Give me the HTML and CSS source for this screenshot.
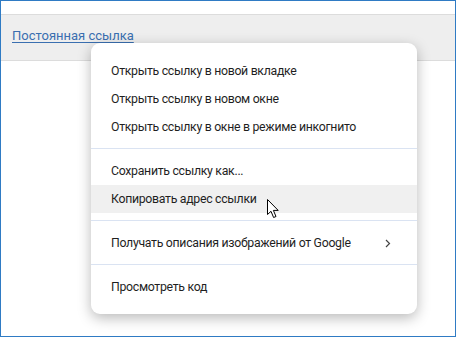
FILE: index.html
```html
<!DOCTYPE html>
<html lang="ru">
<head>
    <meta charset="UTF-8">
    <title>Контекстное меню ссылки</title>
    <link rel="stylesheet" href="styles.css">
</head>
<body>

    <div class="frame">
        <div class="post-bar">
            <a class="permalink" href="#">Постоянная ссылка</a>
        </div>

        <ul class="context-menu">
            <li class="item">Открыть ссылку в новой вкладке</li>
            <li class="item">Открыть ссылку в новом окне</li>
            <li class="item">Открыть ссылку в окне в режиме инкогнито</li>
            <li class="sep"></li>
            <li class="item">Сохранить ссылку как...</li>
            <li class="item hover">
                Копировать адрес ссылки
                <!-- курсор мыши -->
                <svg class="cursor" width="13" height="20" viewBox="0 0 13 20">
                    <path d="M0.5 0.5 L0.5 15.5 L4 12.3 L6.6 18.5 L9 17.5 L6.4 11.4 L11.2 11.4 Z"
                          fill="#fff" stroke="#000" stroke-width="1" stroke-linejoin="miter"/>
                </svg>
            </li>
            <li class="sep"></li>
            <li class="item">
                Получать описания изображений от Google
                <span class="chevron">
                    <svg width="6" height="9" viewBox="0 0 6 9">
                        <path d="M1 1 L4.5 4.5 L1 8" fill="none" stroke="#444" stroke-width="1.2"/>
                    </svg>
                </span>
            </li>
            <li class="sep"></li>
            <li class="item">Просмотреть код</li>
        </ul>
    </div>

</body>
</html>
```

FILE: styles.css
```css
:root {
    --frame: #2f7bc4;
    --text: #1f1f1f;
    --link: #3a6fb0;
    --sep: #dae3f2;
    --hover: #f0f0f0;
}

body {
    margin: 0;
    font-family: 'Roboto', 'Noto Sans', sans-serif;
    background: #fff;
}

.frame {
    position: relative;
    height: 335px;
    border: 1px solid var(--frame);
    background: #fff;
    overflow: hidden;
}

.post-bar {
    margin-top: 13px;
    width: 443px;
    height: 45px;
    background: #eeeeee;
    border: 1px solid #dcdcdc;
    border-left: none;
    display: flex;
    align-items: center;
    padding-left: 11px;
    box-sizing: content-box;
}

.permalink {
    color: var(--link);
    font-size: 13px;
    text-decoration: underline;
    text-underline-offset: 2px;
    margin-top: -4px;
}

.context-menu {
    position: absolute;
    left: 90px;
    top: 42px;
    width: 326px;
    margin: 0;
    padding: 14px 0 13px;
    list-style: none;
    background: #fff;
    border-radius: 9px;
    box-shadow: 0 4px 14px rgba(0,0,0,0.28);
    box-sizing: border-box;
}

.item {
    position: relative;
    height: 28px;
    display: flex;
    align-items: center;
    padding: 0 20px;
    font-size: 12.3px;
    letter-spacing: -0.3px;
    color: var(--text);
}

.item.hover {
    background: var(--hover);
}

.sep {
    height: 1px;
    background: var(--sep);
    margin: 7px 0 8px;
}

.chevron {
    margin-left: auto;
    margin-right: 6px;
    display: flex;
}

.cursor {
    position: absolute;
    left: 176px;
    top: 14px;
}
```
